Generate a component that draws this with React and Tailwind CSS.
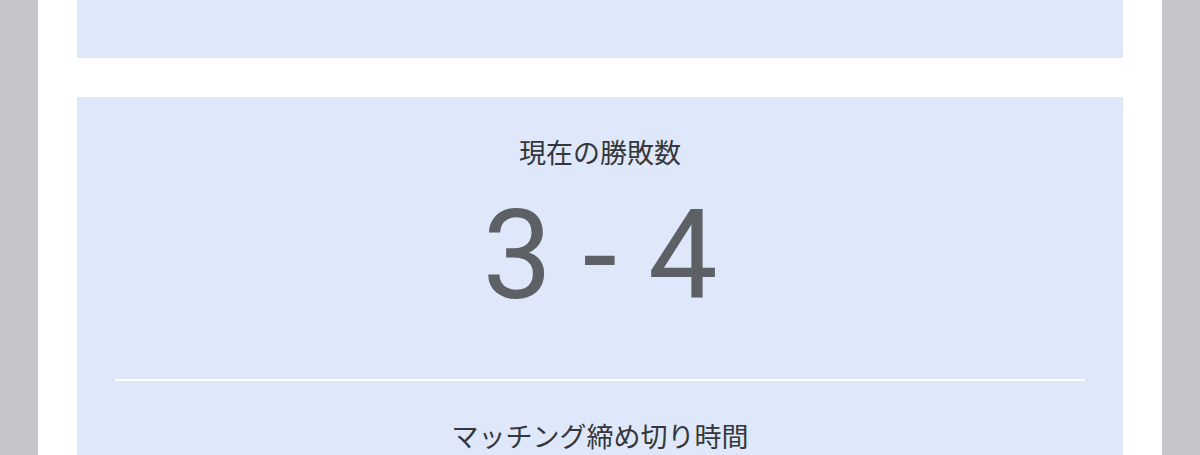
export default function App() {
  return (
    <div className="min-h-screen bg-[#c3c5ca] font-['Roboto','Noto_Sans_CJK_JP',sans-serif]">
      <div className="mx-[38px] min-h-[455px] bg-white px-[39px]">
        {/* tail of the panel above */}
        <div className="h-[58px] bg-[#dee8fa]" />

        <section className="mt-[39px] bg-[#dee8fa] px-[38px] pt-[35px] pb-10 text-center">
          <h2 className="text-[27px] leading-[40px] text-[#35373b] font-['Noto_Sans_CJK_JP',sans-serif]">
            現在の勝敗数
          </h2>
          <div className="mt-[22px] text-[124px] leading-none text-[#5d6166] font-['Roboto',sans-serif]">
            3 - 4
          </div>
          <hr className="mt-[61px] border-0 h-[2px] bg-white" />
          <h2 className="mt-[35px] text-[27px] leading-[40px] text-[#35373b] font-['Noto_Sans_CJK_JP',sans-serif]">
            マッチング締め切り時間
          </h2>
        </section>
      </div>
    </div>
  )
}
